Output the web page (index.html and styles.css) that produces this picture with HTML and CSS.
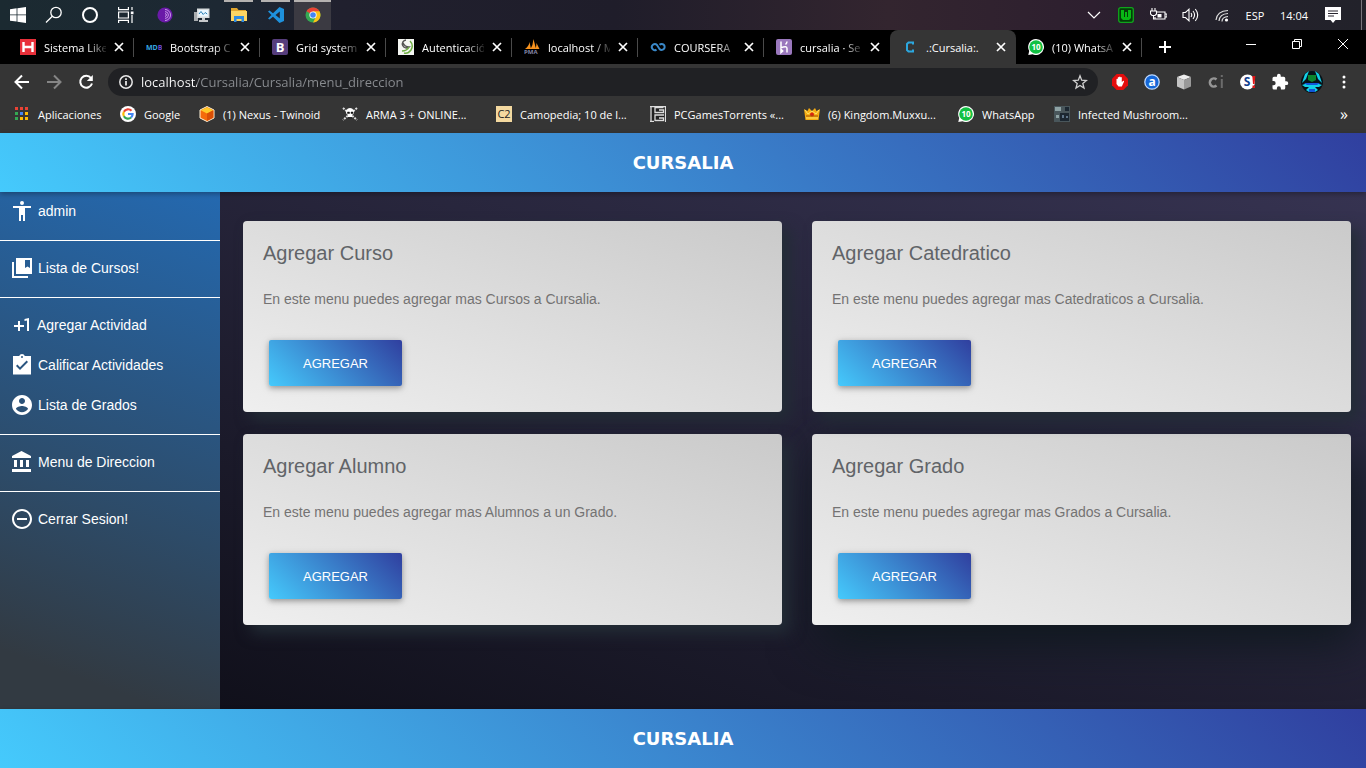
FILE: index.html
```html
<!DOCTYPE html>
<html lang="es">
<head>
<meta charset="utf-8">
<title>.:Cursalia:.</title>
<link rel="stylesheet" href="styles.css">
</head>
<body>

<svg width="0" height="0" class="defs" aria-hidden="true">
  <symbol id="x" viewBox="0 0 10 10"><path d="M1 1l8 8M9 1l-8 8" stroke="#fff" stroke-width="1.7"/></symbol>
  <symbol id="wa" viewBox="0 0 16 16"><path d="M8 0a8 8 0 1 1-3.500 15.200L.3 16l.9-4A8 8 0 0 1 8 0z" fill="#fff"/><circle cx="8" cy="8" r="6.800" fill="#12c143"/><text x="8" y="11" font-size="8" font-weight="700" text-anchor="middle" fill="#fff">10</text></symbol>
</svg>

<div class="taskbar">
  <button class="task" aria-label="Inicio"><svg width="16" height="16" viewBox="0 0 16 16" fill="#fff"><path d="M0 2.200L6.600 1.300V7.500H0zM7.400 1.200L16 0v7.500H7.400zM0 8.300h6.600v6.300L0 13.700zM7.400 8.300H16V16l-8.600-1.200z"/></svg></button>
  <button class="task" aria-label="Buscar"><svg width="18" height="18" viewBox="0 0 18 18" fill="none" stroke="#fff" stroke-width="1.300"><circle cx="11" cy="6.500" r="5.200"/><path d="M7.300 10.300L1 16.500"/></svg></button>
  <button class="task" aria-label="Cortana"><svg width="18" height="18" viewBox="0 0 18 18" fill="none" stroke="#fff" stroke-width="2"><circle cx="9" cy="9" r="7"/></svg></button>
  <button class="task" aria-label="Vista de tareas"><svg width="18" height="16" viewBox="0 0 18 16" fill="none" stroke="#fff" stroke-width="1.200"><path d="M1.600 0v2.600h9.800V0M1.600 16v-2.600h9.800V16M1.600 5h9.800v6H1.600zM15 0v3M15 8v8"/><path d="M13.800 4.500h2.700v2.700h-2.700z" fill="#fff" stroke="none"/></svg></button>
  <div class="apps">
    <button class="task" aria-label="Tor"><svg width="16" height="16" viewBox="0 0 16 16"><circle cx="8" cy="8" r="7.600" fill="#6a1aa8"/><g fill="none" stroke="#c99be8"><path d="M8 2.500a5.500 5.500 0 0 1 0 11M8 4.600a3.400 3.400 0 0 1 0 6.800M8 6.600a1.400 1.400 0 0 1 0 2.800"/></g></svg></button>
    <button class="task" aria-label="Monitor"><svg width="16" height="16" viewBox="0 0 16 16"><path d="M0 5h4v9H0z" fill="#a9adb0"/><path d="M3 1.500h12.500v9.500H3z" fill="#d7dbdd"/><path d="M4.500 3h9.500v6.500H4.500z" fill="#eaf7ff"/><path d="M5 7l2-2.500 2.200 3 2-2 2 1.500" fill="none" stroke="#2a7fb5"/><path d="M8 11h3v2h3v2H5v-2h3z" fill="#c6c9cb"/></svg></button>
    <button class="task open" aria-label="Explorador"><svg width="16" height="14" viewBox="0 0 16 14"><path d="M0 0h6l1.500 2H15v3H0z" fill="#e0a52f"/><path d="M0 3h16v10H0z" fill="#fdd563"/><path d="M3 8h10v6h-2.500v-3h-5v3H3z" fill="#2f8be0"/></svg></button>
    <button class="task open" aria-label="Visual Studio Code"><svg width="16" height="16" viewBox="0 0 16 16"><path d="M11.500 0L16 2v12l-4.500 2L5 9.800 1.500 12.500 0 11.500 3.500 8 0 4.500l1.500-1L5 6.200zM11.800 4.500L7.500 8l4.300 3.500z" fill="#1e91dc"/></svg></button>
    <button class="task open active" aria-label="Chrome"><svg width="16" height="16" viewBox="0 0 16 16"><circle cx="8" cy="8" r="7.500" fill="#34a853"/><path d="M8 8L1.500 4.250A7.500 7.500 0 0 1 14.500 4.250z" fill="#ea4335"/><path d="M8 8V4.300h6.500A7.500 7.500 0 0 1 8 15.500L11 9.800z" fill="#fbc116"/><circle cx="8" cy="8" r="3.600" fill="#fff"/><circle cx="8" cy="8" r="2.800" fill="#4285f4"/></svg></button>
  </div>
  <div class="tray">
    <button aria-label="Iconos ocultos"><svg width="14" height="8" viewBox="0 0 14 8" fill="none" stroke="#fff" stroke-width="1.200"><path d="M1 1l6 6 6-6"/></svg></button>
    <button aria-label="W"><svg width="16" height="16" viewBox="0 0 16 16"><rect x=".7" y=".7" width="14.600" height="14.600" rx="2" fill="#043d08" stroke="#10a51c" stroke-width="1.300"/><path d="M3 3h3v7h1V5h2v5h1V3h3v8l-2 2H5l-2-2z" fill="#08b814"/></svg></button>
    <button aria-label="Batería"><svg width="17" height="14" viewBox="0 0 17 14" fill="none" stroke="#fff" stroke-width="1.100"><path d="M7 4h8v7H5V9M15.500 6H17v3h-1.500M2 0v3M5 0v3M0.500 3h6v3l-1.500 1.500H2L.5 6zM3.500 8v3H5"/><path d="M7.500 6h4v3.500h-4z" fill="#fff" stroke="none"/></svg></button>
    <button aria-label="Volumen"><svg width="17" height="14" viewBox="0 0 17 14" fill="none" stroke="#fff" stroke-width="1.100"><path d="M1 4.500h2.500L7 1.200v11.600L3.500 9.500H1zM9 5q1.500 2 0 4M11 3q3.200 4 0 8M13.300 1q4.800 6 0 12"/></svg></button>
    <button aria-label="Red"><svg width="15" height="15" viewBox="0 0 15 15" fill="none" stroke="#ddd" stroke-width="1.200"><path d="M1 12Q2 3 13 2.500M4 13Q4.500 6 13 5.500M7 13.500Q7 9 13 8.500"/><circle cx="11.500" cy="12" r="1.600" fill="#fff" stroke="none"/></svg></button>
    <span class="lang">ESP</span>
    <time class="clock">14:04</time>
    <button class="notice" aria-label="Notificaciones"><svg width="16" height="16" viewBox="0 0 16 16"><path d="M0 0h16v13h-5.500L8 16l-2.500-3H0z" fill="#fff"/><path d="M3 4h10M3 6.500h10M3 9h6" stroke="#28252f"/></svg></button>
    <span class="edge"></span>
  </div>
</div>

<div class="tabs">
  <div class="tab"><svg width="16" height="16" viewBox="0 0 16 16"><path d="M0 0h16v16H0z" fill="#e8303a"/><path d="M3.500 3v10M12.500 3v10M3.500 8h9" stroke="#fff" stroke-width="2.400"/></svg><a href="#">Sistema Like</a><button aria-label="Cerrar"><svg width="10" height="10"><use href="#x"/></svg></button></div>
  <div class="tab"><svg width="16" height="16" viewBox="0 0 16 16"><text y="11" font-size="7" font-weight="700" fill="#35a8e0">MD<tspan fill="#6b48c8">B</tspan></text></svg><a href="#">Bootstrap C</a><button aria-label="Cerrar"><svg width="10" height="10"><use href="#x"/></svg></button></div>
  <div class="tab"><svg width="16" height="16" viewBox="0 0 16 16"><rect width="16" height="16" rx="2" fill="#563d7c"/><text x="8" y="12.500" font-size="13" font-weight="700" text-anchor="middle" fill="#fff">B</text></svg><a href="#">Grid system</a><button aria-label="Cerrar"><svg width="10" height="10"><use href="#x"/></svg></button></div>
  <div class="tab"><svg width="16" height="16" viewBox="0 0 16 16"><path d="M0 0h16v16H0z" fill="#f4f6f2"/><g fill="none" stroke-width="1.500"><path d="M8 1a4 4 0 1 0 3 7q-4 0-6-4" stroke="#555"/><path d="M12 2q4 4 1 9-3 4-7 3M4 12q5 0 7-4" stroke="#6eae42"/></g></svg><a href="#">Autenticació</a><button aria-label="Cerrar"><svg width="10" height="10"><use href="#x"/></svg></button></div>
  <div class="tab"><svg width="16" height="16" viewBox="0 0 16 16"><path d="M1 10q4-3 4.500-7l1.500 7zM6.500 10Q9 6 9.500 0l2.500 10zM11.500 10q1-3 1-6l3 6z" fill="#f6921e"/><text x="0" y="15" font-size="6" font-weight="700" fill="#8486a8">PMA</text></svg><a href="#">localhost / M</a><button aria-label="Cerrar"><svg width="10" height="10"><use href="#x"/></svg></button></div>
  <div class="tab"><svg width="16" height="16" viewBox="0 0 16 16"><path d="M6.500 10.600A3 3 0 1 1 7 6L9.500 10a3 3 0 1 0 0-4.200" fill="none" stroke="#3a88c8" stroke-width="2"/></svg><a href="#">COURSERA</a><button aria-label="Cerrar"><svg width="10" height="10"><use href="#x"/></svg></button></div>
  <div class="tab last"><svg width="16" height="16" viewBox="0 0 16 16"><rect width="16" height="16" rx="2" fill="#9a78bd"/><path d="M5 2.500v6.300q6-2.500 6 .7v4M11 2.500q0 1.500-1.500 3M5 10.500v3l1.700-1.500z" fill="none" stroke="#fff" stroke-width="1.500"/></svg><a href="#">cursalia · Se</a><button aria-label="Cerrar"><svg width="10" height="10"><use href="#x"/></svg></button></div>
  <div class="tab current"><svg width="16" height="16" viewBox="0 0 16 16"><path d="M11 5.500V3.500H6.500L5 5v6l1.500 1.500H11v-2" fill="none" stroke="#2ca7de" stroke-width="2"/></svg><a href="#" aria-current="page">.:Cursalia:.</a><button aria-label="Cerrar"><svg width="10" height="10"><use href="#x"/></svg></button></div>
  <div class="tab"><svg width="16" height="16"><use href="#wa"/></svg><a href="#">(10) WhatsA</a><button aria-label="Cerrar"><svg width="10" height="10"><use href="#x"/></svg></button></div>
  <button class="newtab" aria-label="Nueva pestaña"><svg width="12" height="12" viewBox="0 0 12 12" stroke="#fff" stroke-width="2"><path d="M6 0v12M0 6h12"/></svg></button>
  <div class="window">
    <button aria-label="Minimizar"><svg width="10" height="10" viewBox="0 0 10 10" stroke="#fff"><path d="M0 5.500h10"/></svg></button>
    <button aria-label="Restaurar"><svg width="10" height="10" viewBox="0 0 10 10" fill="none" stroke="#fff"><path d="M.5 2.500h7v7h-7zM2.500 2.500v-2h7v7h-2"/></svg></button>
    <button aria-label="Cerrar ventana"><svg width="10" height="10" viewBox="0 0 10 10" stroke="#fff"><path d="M0 0l10 10M10 0L0 10"/></svg></button>
  </div>
</div>

<div class="toolbar">
  <button aria-label="Atrás"><svg width="16" height="16" viewBox="0 0 16 16" fill="none" stroke="#fff" stroke-width="2"><path d="M15 8H2M8 1.500L1.500 8 8 14.500"/></svg></button>
  <button aria-label="Adelante"><svg width="16" height="16" viewBox="0 0 16 16" fill="none" stroke="#858585" stroke-width="2"><path d="M1 8h13M8 1.500L14.500 8 8 14.500"/></svg></button>
  <button aria-label="Recargar"><svg width="16" height="16" viewBox="0 0 16 16"><path d="M13 4A6 6 0 1 0 14 9.500" fill="none" stroke="#fff" stroke-width="2"/><path d="M14.800 1v6h-6z" fill="#fff"/></svg></button>
  <div class="omnibox">
    <svg width="14" height="14" viewBox="0 0 14 14"><circle cx="7" cy="7" r="6.200" fill="none" stroke="#e8e8e8" stroke-width="1.500"/><path d="M7 6v4.500M7 3.300V5" stroke="#fff" stroke-width="1.600"/></svg>
    <input type="text" aria-label="Dirección" value="localhost/Cursalia/Cursalia/menu_direccion">
    <button aria-label="Favorito"><svg width="16" height="16" viewBox="0 0 16 16"><path d="M8 1.800l1.700 4.400 4.700.3-3.600 3 1.200 4.600L8 11.500l-4 2.600 1.200-4.600-3.600-3 4.700-.3z" fill="none" stroke="#d0d0d0" stroke-width="1.300"/></svg></button>
  </div>
  <button aria-label="Bloqueador"><svg width="16" height="16" viewBox="0 0 16 16"><path d="M4.700 0h6.600L16 4.700v6.600L11.300 16H4.700L0 11.300V4.700z" fill="#e40d0d"/><path d="M4.500 8V5q.8-.7 1.300 0V3.500q.8-.8 1.300 0V3q.8-.8 1.400 0v.5q.8-.8 1.300 0V8l1.500-1.200q1 0 .7.900L9.800 12.500H6.500L4.500 10z" fill="#fff"/></svg></button>
  <button aria-label="Extensión a"><svg width="16" height="16" viewBox="0 0 16 16"><circle cx="8" cy="8" r="7.200" fill="#1567d8" stroke="#bcd8ff" stroke-width="1.300"/><text x="8" y="12" font-size="12" font-weight="700" text-anchor="middle" fill="#fff">a</text></svg></button>
  <button aria-label="Cubo"><svg width="16" height="16" viewBox="0 0 16 16"><path d="M8 .5l7 2.500-7 3-7-3z" fill="#eee"/><path d="M1 3l7 3v9.500l-7-3z" fill="#c4c4c4"/><path d="M15 3L8 6v9.500l7-3z" fill="#999"/></svg></button>
  <button aria-label="ci"><svg width="16" height="16" viewBox="0 0 16 16"><path d="M8.500 5.500a4 4 0 1 0 0 6" fill="none" stroke="#969696" stroke-width="2.500"/><path d="M13.800 5v9M13.800 1v2" stroke="#6c6c6c" stroke-width="2"/></svg></button>
  <button aria-label="S"><svg width="16" height="16" viewBox="0 0 16 16"><circle cx="7.500" cy="8" r="7.500" fill="#fff"/><text x="7" y="12" font-size="12" font-weight="700" text-anchor="middle" fill="#123e8c">S</text><path d="M12.300 2h3l-.7 8h-1.600zM12.500 11.500h2.500V14h-2.500z" fill="#e01616"/></svg></button>
  <button aria-label="Extensiones"><svg width="18" height="18" viewBox="0 0 24 24" fill="#fff"><path d="M20.500 11H19V7a2 2 0 0 0-2-2h-4V3.500a2.500 2.500 0 0 0-5 0V5H4a2 2 0 0 0-2 2v3.800h1.500a2.700 2.700 0 0 1 0 5.400H2V20a2 2 0 0 0 2 2h3.800v-1.500a2.700 2.700 0 0 1 5.400 0V22H17a2 2 0 0 0 2-2v-4h1.500a2.500 2.500 0 0 0 0-5z"/></svg></button>
  <button aria-label="Perfil"><svg width="22" height="22" viewBox="0 0 22 22"><circle cx="11" cy="11" r="11" fill="#061218"/><path d="M4 3l4-3-3 8-4 4zM18 3l-4-3 3 8 4 4zM1 14l6-2h8l6 2-3 2H4zM5 19l3-3h6l3 3-3 2H8z" fill="#12cfe6"/><path d="M7 4h8v5l-4 2-4-2z" fill="#0b852c"/><path d="M3 12h16l-3 2H6zM8 18h6v3H8z" fill="#1156d8"/></svg></button>
  <button aria-label="Menú"><svg width="4" height="14" viewBox="0 0 4 14" fill="#fff"><circle cx="2" cy="2" r="1.500"/><circle cx="2" cy="7" r="1.500"/><circle cx="2" cy="12" r="1.500"/></svg></button>
</div>

<div class="bookmarks">
  <a href="#"><svg width="15" height="14" viewBox="0 0 15 14"><path d="M0 0h3v3H0zM5 0h3v3H5zM10 0h3v3h-3z" fill="#ea4335"/><path d="M0 5h3v3H0zM0 10h3v3H0z" fill="#34a853"/><path d="M5 5h3v3H5z" fill="#4285f4"/><path d="M10 5h3v3h-3zM5 10h3v3H5zM10 10h3v3h-3z" fill="#fbbc05"/></svg><span>Aplicaciones</span></a>
  <a href="#"><svg width="16" height="16" viewBox="0 0 16 16"><circle cx="8" cy="8" r="8" fill="#fff"/><g fill="none" stroke-width="2.200"><path d="M11.500 4.800A4.700 4.700 0 0 0 3.900 5.700" stroke="#ea4335"/><path d="M3.900 5.700a4.700 4.700 0 0 0 0 4.600" stroke="#fbbc05"/><path d="M3.900 10.300a4.700 4.700 0 0 0 7.200 1.200" stroke="#34a853"/><path d="M11.100 11.500A4.700 4.700 0 0 0 12.600 8H8" stroke="#4285f4"/></g></svg><span>Google</span></a>
  <a href="#"><svg width="16" height="16" viewBox="0 0 16 16"><path d="M8 .5l7 3.500v8l-7 3.500L1 12V4z" fill="#f56a0a" stroke="#fff3d8"/><path d="M8 1.200l6.300 3.100L8 7.500 1.700 4.300z" fill="#ffc928"/><path d="M8 7.500l6.300-3.200v7.400L8 15z" fill="#d94f05"/></svg><span>(1) Nexus - Twinoid</span></a>
  <a href="#"><svg width="16" height="16" viewBox="0 0 16 16"><path d="M1 2l14 12M15 2L1 14" stroke="#ddd" stroke-width="2" stroke-dasharray="2 1"/><path d="M8 2a4 4 0 0 1 3.500 6L10 9v2H6V9L4.500 8A4 4 0 0 1 8 2z" fill="#fff"/><path d="M5.500 6h2v1.500h-2zM9 6h2v1.500H9zM7 11v2M9 11v2" fill="#111" stroke="#111" stroke-width=".5"/></svg><span>ARMA 3 + ONLINE...</span></a>
  <a href="#"><svg width="16" height="16" viewBox="0 0 16 16"><path d="M0 0h16v16H0z" fill="#f4d9a0"/><text x="8" y="12" font-size="11" text-anchor="middle" fill="#222">C2</text></svg><span>Camopedia; 10 de l...</span></a>
  <a href="#"><svg width="16" height="16" viewBox="0 0 16 16"><path d="M0 0h16v16H0z" fill="#202020"/><path d="M1 0v16M13.500 1.500H5v5h8.500V4H9M14 9H5v5.500h8.500V12H9M0 15.500h4M0 .5h16M15.500 0v16" fill="none" stroke="#ddd" stroke-width="1.300"/></svg><span>PCGamesTorrents «...</span></a>
  <a href="#"><svg width="16" height="16" viewBox="0 0 16 16"><path d="M0 3l3.500 2L5 2l3 3 3-3 1.500 3L16 3l-1.500 11h-13z" fill="#f7ad12"/><path d="M2 12h12M1 4l3 4 4-3 4 3 3-4" fill="none" stroke="#ffe56a"/><circle cx="8" cy="8.500" r="2" fill="#d82414"/><path d="M2 10h12" stroke="#a34e06"/></svg><span>(6) Kingdom.Muxxu...</span></a>
  <a href="#"><svg width="16" height="16"><use href="#wa"/></svg><span>WhatsApp</span></a>
  <a href="#"><svg width="16" height="16" viewBox="0 0 16 16"><path d="M0 0h16v16H0z" fill="#49565b"/><path d="M1 1h6v4H1zM2 9h3v3H2z" fill="#8fa3a5"/><path d="M6 7h9v8H6zM11 1h4v4h-4z" fill="#1c2731"/><path d="M8 9h2v3H8zM12 10h2v2h-2z" fill="#5e7488"/></svg><span>Infected Mushroom...</span></a>
  <button aria-label="Más marcadores">»</button>
</div>

<header class="brand">cursalia</header>

<div class="page">
  <nav class="sidebar">
    <a href="#"><svg width="24" height="24" viewBox="0 0 24 24"><path d="M12 2a2 2 0 1 1 0 4 2 2 0 0 1 0-4zm9 7h-6v13h-2v-6h-2v6H9V9H3V7h18z"/></svg>admin</a>
    <hr>
    <a href="#"><svg width="24" height="24" viewBox="0 0 24 24"><path d="M4 6H2v16h16v-2H4zM6 2h16v16H6zm9 2v8l2.500-1.500L20 12V4z" fill-rule="evenodd"/></svg>Lista de Cursos!</a>
    <hr>
    <a href="#" class="tight"><svg width="24" height="24" viewBox="0 0 24 24"><path d="M10 8H8v4H4v2h4v4h2v-4h4v-2h-4zM14.500 6.080V7.900l2.500-.5V18h2V5z"/></svg>Agregar Actividad</a>
    <a href="#"><svg width="24" height="24" viewBox="0 0 24 24"><path fill-rule="evenodd" d="M21 3h-6.180a3 3 0 0 0-5.640 0H3v18.500h18zM12 3a1 1 0 1 1 0 2 1 1 0 0 1 0-2zm-2 14l-4-4 1.400-1.400 2.600 2.600 6.600-6.600L18 9z"/></svg>Calificar Actividades</a>
    <a href="#"><svg width="24" height="24" viewBox="0 0 24 24"><path d="M12 2C6.480 2 2 6.480 2 12s4.480 10 10 10 10-4.480 10-10S17.520 2 12 2zm0 3c1.660 0 3 1.340 3 3s-1.340 3-3 3-3-1.340-3-3 1.340-3 3-3zm0 14.200c-2.500 0-4.710-1.280-6-3.220.03-1.990 4-3.080 6-3.080 1.990 0 5.970 1.090 6 3.080-1.290 1.940-3.500 3.220-6 3.220z"/></svg>Lista de Grados</a>
    <hr>
    <a href="#"><svg width="24" height="24" viewBox="0 0 24 24"><path d="M4 10v7h3v-7zM10 10v7h3v-7zM2 22h19v-3H2zM16 10v7h3v-7zM11.500 1L2 6v2h19V6z"/></svg>Menu de Direccion</a>
    <hr>
    <a href="#"><svg width="24" height="24" viewBox="0 0 24 24"><path d="M7 11v2h10v-2zM12 2C6.480 2 2 6.480 2 12s4.480 10 10 10 10-4.480 10-10S17.520 2 12 2zm0 18c-4.410 0-8-3.590-8-8s3.590-8 8-8 8 3.590 8 8-3.590 8-8 8z"/></svg>Cerrar Sesion!</a>
  </nav>
  <main class="cards">
    <section class="card"><h2>Agregar Curso</h2><p>En este menu puedes agregar mas Cursos a Cursalia.</p><button>AGREGAR</button></section>
    <section class="card"><h2>Agregar Catedratico</h2><p>En este menu puedes agregar mas Catedraticos a Cursalia.</p><button>AGREGAR</button></section>
    <section class="card"><h2>Agregar Alumno</h2><p>En este menu puedes agregar mas Alumnos a un Grado.</p><button>AGREGAR</button></section>
    <section class="card raised"><h2>Agregar Grado</h2><p>En este menu puedes agregar mas Grados a Cursalia.</p><button>AGREGAR</button></section>
  </main>
</div>

<footer class="brand">cursalia</footer>

</body>
</html>
```
FILE: styles.css
```css
* { box-sizing: border-box; }

body {
  margin: 0;
  min-height: 100vh;
  display: flex;
  flex-direction: column;
  font-family: "Open Sans", "Noto Sans", sans-serif;
  font-size: 11px;
  color: #fff;
  background: #000;
}

a { color: inherit; text-decoration: none; }
button { font: inherit; color: inherit; background: none; border: 0; padding: 0; display: flex; align-items: center; justify-content: center; }
svg { flex: none; display: block; }
.defs { position: absolute; }

/* Taskbar */
.taskbar {
  height: 30px;
  display: flex;
  background: linear-gradient(90deg, #1b2a31, #1d2833 16%, #20202e 25%, #1f1d2a 45%, #33252f 65%, #2d1f2f 80%, #24222c 88%, #22222a);
}
.task { width: 36px; height: 30px; }
.apps { display: flex; margin-left: 2px; }
.apps .task { width: 37px; border-top: 2px solid transparent; padding-bottom: 2px; }
.apps .open { border-color: #b5b2b0; background-clip: padding-box; width: 29px; margin: 0 4px; }
.apps .active { width: 37px; margin: 0; background: #3b3a42; }
.tray { margin-left: auto; display: flex; align-items: center; }
.tray button { width: 32px; height: 30px; }
.lang { width: 34px; text-align: center; }
.clock { width: 44px; text-align: center; }
.tray .notice { width: 34px; }
.edge { width: 16px; height: 30px; display: flex; }
.edge::after { content: ""; width: 1px; margin-left: 11px; background: #77757c; }

/* Tab strip */
.tabs { height: 34px; display: flex; padding-left: 8px; background: #000; }
.tab { flex: 0 1 126px; min-width: 0; display: flex; align-items: center; gap: 8px; padding: 0 10px 0 12px; position: relative; }
.tab a { flex: 1; min-width: 0; overflow: hidden; white-space: nowrap; mask-image: linear-gradient(90deg, #000 70%, transparent 105%); }
.tab::after { content: ""; position: absolute; right: 0; top: 8px; height: 19px; width: 1px; background: #4a4a4a; }
.last::after, .current::after { display: none; }
.current { background: #353535; border-radius: 8px 8px 0 0; }
.current a { mask-image: none; }
.newtab { width: 46px; }
.window { margin-left: auto; display: flex; height: 28px; }
.window button { width: 46px; }

/* Toolbar */
.toolbar { height: 36px; display: flex; align-items: center; background: #353535; padding: 0 6px; }
.toolbar > button { width: 32px; height: 32px; }
.omnibox { flex: 1; height: 28px; margin: 0 6px; border-radius: 14px; background: #202124; display: flex; align-items: center; gap: 8px; padding: 0 10px 0 11px; }
.omnibox input {
  flex: 1;
  min-width: 0;
  border: 0;
  padding: 0;
  outline: 0;
  font: inherit;
  font-size: 13px;
  color: transparent;
  background: linear-gradient(90deg, #fff 56px, #8a8d91 56px);
  background-clip: text;
}

/* Bookmarks */
.bookmarks {
  height: 33px;
  display: grid;
  grid-template-columns: 105px 79px 143px repeat(4, 154px) 96px 1fr auto;
  align-items: center;
  padding: 0 18px 5px 15px;
  background: #353535;
  white-space: nowrap;
}
.bookmarks a { display: flex; align-items: center; gap: 8px; }
.bookmarks button { font-size: 16px; }

/* Site */
.brand {
  flex: none;
  height: 59px;
  display: flex;
  align-items: center;
  justify-content: center;
  background: linear-gradient(45deg, #45cafc, #303f9f);
  font: 700 18px "DejaVu Sans", sans-serif;
  text-transform: uppercase;
  position: relative;
  box-shadow: 0 2px 5px rgba(0, 0, 0, .3);
}
.page {
  flex: 1;
  display: flex;
  font-family: "Liberation Sans", Arial, sans-serif;
  font-size: 14px;
  background: linear-gradient(20deg, #0d0d16, #363351);
}
.sidebar { flex: none; width: 220px; background: linear-gradient(20deg, #323a42 10%, #2d4b68 40%, #2469b0); }
.sidebar a { height: 40px; padding: 0 10px 2px; display: flex; align-items: center; gap: 4px; }
.sidebar .tight { gap: 3px; }
.sidebar svg { fill: #fff; }
.sidebar hr { height: 1px; border: 0; margin: 8px 0; background: #fff; }

.cards {
  flex: 1;
  display: grid;
  grid-template-columns: 1fr 1fr;
  align-content: start;
  gap: 22px 30px;
  padding: 29px 15px 29px 23px;
  isolation: isolate;
}
.card {
  padding: 20px;
  border-radius: 4px;
  color: #747373;
  background: linear-gradient(20deg, #efefef, #cacaca);
  box-shadow: 8px 8px 15px #232d36;
}
.raised { box-shadow: 8px 17px 50px #0e181d; z-index: -1; }
.card h2 { margin: 0 0 24px; font-size: 20px; font-weight: 400; line-height: 24px; color: #616468; }
.card p { margin: 0 0 30px; line-height: 21px; }
.card button {
  margin: 0 6px 6px;
  padding: 0 34px;
  height: 46px;
  border-radius: 2px;
  font-size: 13px;
  color: #fff;
  background: linear-gradient(45deg, #45cafc, #303f9f);
  box-shadow: 0 2px 5px rgba(0, 0, 0, .25), 0 2px 10px rgba(0, 0, 0, .15);
}
```
